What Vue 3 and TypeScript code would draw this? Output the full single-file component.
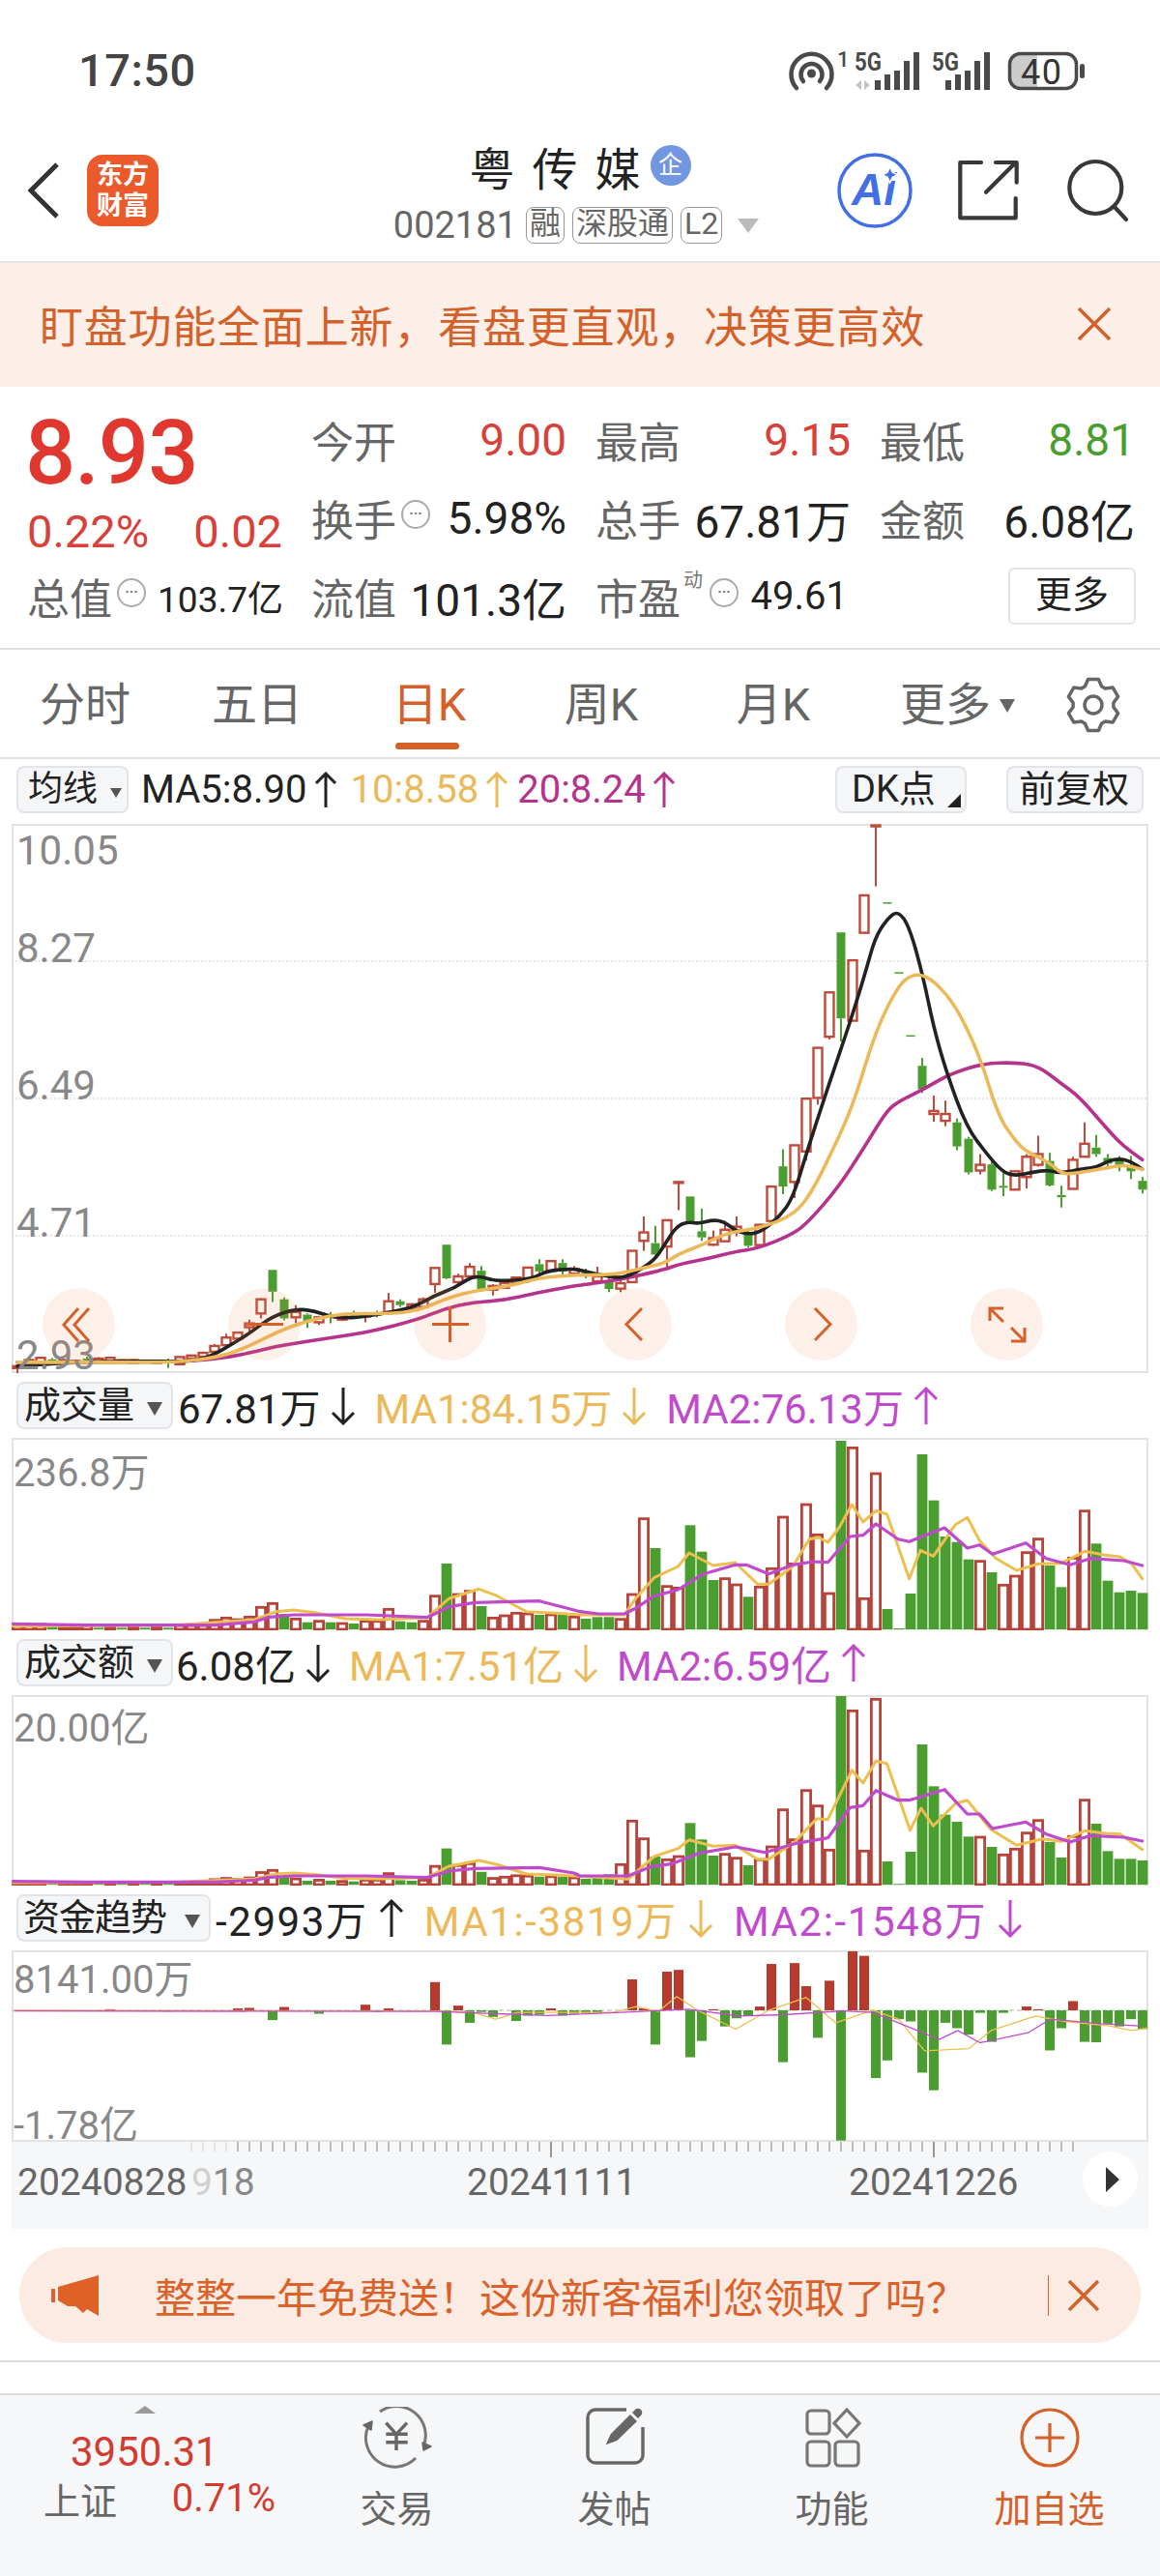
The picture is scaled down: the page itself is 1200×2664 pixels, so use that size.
<script setup lang="ts">
type Seg = { t: string; c: string; arrow?: "up" | "down" };

// candle: index, colour (1 red, 0 green), wick high, body top, body bottom, wick low (read off the 2.53x crop)
const rawCandles: number[][] = [
  [0,1,1495,1500,1505,1518],[1,1,1480,1484,1492,1496],[2,1,1475,1478,1490,1494],[3,0,1478,1482,1490,1494],[4,1,1482,1484,1490,1494],
  [5,1,1484,1486,1490,1492],[6,0,1475,1480,1484,1490],[7,1,1476,1480,1488,1492],[8,1,1476,1478,1488,1490],[9,1,1482,1484,1488,1490],
  [10,1,1482,1484,1492,1494],[11,0,1484,1485,1488,1490],[12,1,1484,1486,1492,1494],[13,0,1480,1486,1490,1505],[14,1,1475,1476,1495,1498],
  [15,1,1470,1472,1480,1482],[16,1,1462,1465,1475,1478],[17,1,1442,1447,1462,1468],[18,1,1415,1425,1445,1448],[19,1,1410,1412,1428,1432],
  [20,1,1378,1388,1398,1412],[21,1,1322,1325,1362,1375],[22,0,1248,1248,1305,1332],[23,0,1320,1325,1375,1380],[24,1,1340,1358,1372,1388],
  [25,0,1362,1365,1385,1400],[26,1,1368,1372,1385,1392],[27,0,1358,1365,1372,1388],[28,1,1362,1368,1378,1382],[29,0,1355,1362,1368,1375],
  [30,1,1358,1362,1370,1385],[31,0,1355,1360,1368,1372],[32,1,1308,1330,1358,1360],[33,0,1325,1330,1340,1345],[34,1,1335,1338,1350,1355],
  [35,1,1320,1325,1345,1350],[36,1,1243,1243,1285,1308],[37,0,1182,1182,1270,1272],[38,1,1258,1265,1280,1285],[39,1,1230,1240,1265,1272],
  [40,0,1238,1250,1300,1305],[41,1,1285,1290,1300,1315],[42,1,1278,1282,1295,1298],[43,1,1265,1268,1282,1285],[44,1,1240,1242,1270,1282],
  [45,0,1220,1233,1252,1258],[46,1,1225,1225,1250,1255],[47,0,1220,1230,1252,1265],[48,1,1238,1245,1258,1265],[49,0,1245,1255,1265,1270],
  [50,1,1240,1265,1278,1280],[51,0,1260,1278,1298,1306],[52,1,1270,1283,1297,1306],[53,1,1198,1198,1280,1282],[54,1,1108,1150,1172,1198],
  [55,0,1133,1178,1208,1215],[56,1,1118,1118,1187,1245],[57,1,1016,1018,1020,1092],[58,0,1056,1056,1125,1125],[59,0,1088,1147,1163,1172],
  [60,1,1145,1165,1182,1185],[61,1,1120,1143,1173,1175],[62,1,1108,1135,1145,1160],[63,0,1145,1152,1185,1190],[64,1,1128,1130,1183,1185],
  [65,1,1030,1030,1120,1125],[66,0,932,977,1030,1050],[67,1,922,922,1018,1060],[68,1,800,800,938,962],[69,1,667,667,798,815],
  [70,1,522,522,638,645],[71,0,365,365,590,650],[72,1,438,438,596,598],[73,1,268,268,366,366],[74,1,85,85,87,245],
  [75,0,286,286,289,289],[76,0,469,469,472,472],[77,0,634,634,637,637],[78,0,693,714,775,785],[79,1,792,832,840,860],
  [80,1,805,840,858,872],[81,0,852,862,925,935],[82,0,900,905,993,998],[83,1,945,973,988,998],[84,0,960,972,1038,1042],
  [85,0,990,1028,1033,1055],[86,1,988,990,1038,1040],[87,1,945,952,1005,1035],[88,1,897,945,973,978],[89,0,942,963,1027,1030],
  [90,0,1028,1052,1058,1085],[91,1,952,960,1036,1036],[92,1,862,918,952,952],[93,0,895,928,945,952],[94,0,945,955,970,985],
  [95,0,950,960,975,990],[96,0,950,975,990,1010],[97,0,1005,1015,1038,1048],
];
const cx = (i: number) => 18 + 12 * i;
const cy = (z: number) => 820 + z / 2.53;
const candles = rawCandles.map(([i, red, h, t, b, l]) => ({
  x: cx(i),
  red: red === 1,
  h: cy(h),
  t: cy(t),
  b: cy(b),
  l: cy(l),
}));

const colours =
  "rrrgrrrgrgrgrgrrrrrrrrrgrgrgrgrrrggrrgrrgrrrrgrgrggg" +
  "rrrgrrgggrrgrrrrrrrgrrrggggggggrgrrrrggrrggggg";

const volLeft = [1380,1378,1375,1384,1382,1382,1378,1385,1385,1385,1385,1385,1385,1385,1378,1378,1378,1362,1355,1360,1352,1322,1310,1342,1358,1368,1365,1368,1372,1372,1365,1365,1328,1365,1368,1365,1287,1186,1282,1272,1318,1355,1348,1340,1342,1345,1345,1345,1352];
const volRight = [700,695,695,702,625,390,481,600,605,410,492,580,576,595,632,602,545,385,530,346,440,622,148,170,638,250,670,730,622,190,333,445,462,516,522,556,596,568,495,453,535,602,512,366,467,582,618,613,620];
const volHeights = [
  ...volLeft.map((z) => (1390 - z) / 3),
  ...volRight.map((z) => (733 - z) / 3),
];
const amtRight = [1495,1465,1330,1385,1440,1450,1440,1336,1387,1437,1433,1445,1467,1450,1410,1295,1388,1235,1283,1420,942,988,1423,952,1455,1525,1425,1092,1222,1310,1332,1378,1380,1410,1435,1417,1367,1328,1395,1443,1378,1265,1338,1423,1447,1447,1452];
const amtHeights = volHeights.map((h, i) => (i < 51 ? h * 0.55 : (1527 - amtRight[i - 51]) / 3));

function bars(heights: number[], base: number) {
  return heights.map((h, i) => ({ x: cx(i), red: colours[i] === "r", y: base - h, h }));
}
const volBars = bars(volHeights, 1685);
const amtBars = bars(amtHeights, 1949);

// fund trend: index -> end of the bar in the crop's y, zero line at 320
const fundRaw: number[][] = [[5,322],[8,318],[13,323],[19,316],[20,315],[22,342],[23,313],[26,328],[30,308],[31,324],[32,316],[36,258],[37,396],[38,310],[39,348],[40,324],[41,335],[43,344],[44,332],[45,330],[46,316],[47,332],[48,328],[49,326],[50,325],[53,252],[54,316],[55,396],[56,235],[57,231],[58,424],[59,388],[60,318],[61,356],[62,338],[63,333],[64,312],[65,218],[66,435],[67,216],[68,267],[69,381],[70,255],[71,608],[72,190],[73,200],[74,470],[75,431],[76,340],[77,345],[78,458],[79,497],[80,348],[81,360],[82,374],[83,326],[84,390],[85,326],[87,312],[88,318],[89,409],[90,360],[91,300],[92,390],[93,391],[94,350],[95,356],[96,340],[97,362]];
const fy = (z: number) => 1930 + z / 2.136;
const fundBars = fundRaw.map(([i, z]) => ({
  x: cx(i),
  red: z < 320,
  y: Math.min(fy(z), 2080),
  h: Math.abs(fy(z) - 2080),
}));

function join(list: number[], fx: (n: number) => number, fyy: (n: number) => number) {
  const out: string[] = [];
  for (let i = 0; i < list.length; i += 2) out.push(`${fx(list[i]).toFixed(1)},${fyy(list[i + 1]).toFixed(1)}`);
  return out.join(" ");
}

// rounds the corners of a point list, the price averages are smooth curves
function smooth(points: string) {
  const p = points.split(" ").map((s) => s.split(",").map(Number));
  let d = `M${p[0][0]} ${p[0][1]}`;
  for (let i = 1; i < p.length - 1; i++) {
    const mx = ((p[i][0] + p[i + 1][0]) / 2).toFixed(1);
    const my = ((p[i][1] + p[i + 1][1]) / 2).toFixed(1);
    d += `Q${p[i][0]} ${p[i][1]} ${mx} ${my}`;
  }
  const last = p[p.length - 1];
  return d + `L${last[0]} ${last[1]}`;
}

const lx3 = (z: number) => z / 2.613;
const rx3 = (z: number) => 600 + z / 2.613;
const main = (l: number[], r: number[]) => smooth(join(l, lx3, cy) + " " + join(r, rx3, cy));

const ma5 = main(
  [47,1500,200,1490,300,1487,450,1487,500,1488,560,1480,640,1435,680,1410,735,1370,800,1350,850,1355,890,1370,950,1375,1050,1360,1120,1345,1175,1315,1230,1295,1270,1268,1300,1265,1330,1275,1380,1277,1440,1270,1480,1250,1540,1245],
  [0,1248,50,1260,105,1270,140,1260,200,1225,230,1180,260,1135,290,1122,320,1127,360,1117,390,1122,420,1145,455,1155,490,1148,540,1108,575,1060,610,950,670,770,730,600,770,475,797,380,830,330,860,308,890,350,925,470,955,610,990,730,1045,875,1100,945,1140,990,1175,1003,1235,990,1270,988,1300,995,1360,983,1395,980,1430,962,1460,957,1490,965,1520,985],
);
const ma10 = main(
  [47,1490,300,1490,480,1490,600,1475,680,1445,750,1410,820,1385,890,1368,950,1362,1050,1363,1130,1355,1200,1325,1270,1305,1380,1290,1460,1268,1550,1262],
  [0,1262,100,1260,160,1245,230,1230,265,1207,330,1183,400,1150,490,1138,580,1103,630,1040,700,900,740,810,800,620,860,505,895,477,925,476,960,495,1015,555,1080,685,1130,845,1180,915,1210,940,1270,968,1300,995,1330,997,1430,980,1470,973,1520,985],
);
const ma20 = main(
  [47,1490,450,1490,600,1480,700,1460,760,1445,900,1425,1000,1410,1130,1378,1200,1350,1280,1332,1360,1328,1450,1308,1550,1290],
  [0,1288,100,1275,230,1247,270,1232,350,1218,420,1200,480,1192,575,1155,620,1120,700,1030,770,925,830,830,865,805,930,775,1000,735,1090,708,1180,705,1240,715,1300,760,1350,795,1430,885,1470,925,1520,960],
);

const lx4 = (z: number) => z / 2.24;
const ly4 = (z: number) => 1220 + z / 3;
const ry5 = (z: number) => 1440 + z / 3;
const volOrangeLeft = [30,1385,400,1382,590,1365,640,1340,680,1335,730,1343,800,1362,880,1365,990,1358,1040,1300,1110,1270,1150,1290,1220,1340,1290,1345];
const volPurpleLeft = [30,1378,200,1382,500,1382,590,1372,620,1358,680,1350,850,1350,990,1358,1040,1325,1100,1312,1250,1307,1330,1335];
const volOrange = join(volOrangeLeft, lx4, ly4) + " " + join([0,690,120,690,150,640,200,575,265,540,295,498,360,537,420,528,480,595,510,595,575,540,620,455,645,450,670,465,700,420,735,348,765,402,800,367,830,378,890,578,920,490,955,508,1015,410,1047,388,1080,460,1125,515,1180,552,1240,532,1300,530,1365,493,1420,505,1460,510,1490,530,1520,578], rx3, ry5);
const volPurple = join(volPurpleLeft, lx4, ly4) + " " + join([0,680,50,687,120,687,150,670,200,632,265,612,330,565,420,535,450,535,510,563,575,535,630,525,670,527,730,447,765,443,800,408,860,455,890,463,985,420,1047,483,1080,473,1115,502,1205,467,1260,515,1325,535,1380,515,1470,522,1520,537], rx3, ry5);
const amtLeft = (z: number) => 1949 - (1685 - ly4(z)) * 0.6;
const amtOrange = join(volOrangeLeft, lx4, amtLeft) + " " + join([130,1510,200,1440,265,1415,295,1388,360,1408,420,1405,480,1448,510,1448,580,1395,640,1322,670,1325,735,1172,765,1212,800,1143,830,1152,892,1358,922,1290,955,1345,1015,1275,1047,1265,1110,1355,1180,1405,1250,1385,1300,1393,1365,1360,1420,1368,1460,1370,1520,1418], rx3, ry5);
const amtPurple = join(volPurpleLeft, lx4, amtLeft) + " " + join([0,1500,130,1500,190,1472,250,1462,320,1430,420,1410,500,1427,580,1400,670,1382,730,1288,765,1282,800,1235,860,1265,890,1265,985,1232,1047,1308,1080,1308,1115,1353,1205,1333,1260,1370,1325,1395,1380,1375,1470,1380,1520,1392], rx3, ry5);

const lx6 = (z: number) => z / 1.307;
const fundOrange = join([20,320,580,322,640,325,670,340,700,325,830,325,860,312,890,323,915,290,945,322,995,362,1040,320,1090,292,1130,348,1180,320,1215,340,1250,410,1310,405,1340,365,1400,333,1440,345,1500,355,1530,365,1550,360], lx6, fy);
const fundPurple = join([20,322,590,323,740,332,840,325,930,318,1000,333,1060,330,1140,322,1180,325,1270,385,1295,365,1325,392,1390,370,1420,340,1490,350,1540,355], lx6, fy);

const ticks = Array.from({ length: 77 }, (_, k) => ({ x: cx(k + 15), long: k + 15 === 46 || k + 15 === 79, faint: k < 4 }));

const priceLabels = [
  { t: "10.05", top: 3 },
  { t: "8.27", top: 104 },
  { t: "6.49", top: 246 },
  { t: "4.71", top: 388 },
  { t: "2.93", top: 525 },
];
const navButtons = ["first", "minus", "plus", "prev", "next", "expand"];

const maLegend: Seg[] = [
  { t: "MA5:8.90", c: "k", arrow: "up" },
  { t: "10:8.58", c: "o", arrow: "up" },
  { t: "20:8.24", c: "m", arrow: "up" },
];
const volLegend: Seg[] = [
  { t: "67.81万", c: "k", arrow: "down" },
  { t: "MA1:84.15万", c: "o", arrow: "down" },
  { t: "MA2:76.13万", c: "p", arrow: "up" },
];
const amtLegend: Seg[] = [
  { t: "6.08亿", c: "k", arrow: "down" },
  { t: "MA1:7.51亿", c: "o", arrow: "down" },
  { t: "MA2:6.59亿", c: "p", arrow: "up" },
];
const fundLegend: Seg[] = [
  { t: "-2993万", c: "k", arrow: "up" },
  { t: "MA1:-3819万", c: "o", arrow: "down" },
  { t: "MA2:-1548万", c: "p", arrow: "down" },
];

const tabs = ["分时", "五日", "日K", "周K", "月K", "更多"];

// six rounded teeth round a ring
const gearPath = (() => {
  const c = 30;
  const pts: string[] = [];
  for (let k = 0; k < 6; k++) {
    const a = (k * Math.PI) / 3 - Math.PI / 2;
    for (const [r, d] of [[21, -0.42], [27, -0.2], [27, 0.2], [21, 0.42]]) {
      pts.push(`${(c + r * Math.cos(a + d)).toFixed(1)},${(c + r * Math.sin(a + d)).toFixed(1)}`);
    }
  }
  return "M" + pts.join("L") + "Z";
})();
</script>

<template>
  <div class="page">
    <div class="status">
      <span class="time">17:50</span>
      <svg class="sys" width="310" height="60" viewBox="815 45 310 60">
        <g fill="none" stroke="#4a4a4a" stroke-width="4.5" stroke-linecap="round">
          <path d="M824 91a21 21 0 1 1 31 0" />
          <path d="M831 84a11 11 0 1 1 17 0" />
        </g>
        <circle cx="839.5" cy="76" r="4.5" fill="#4a4a4a" />
        <text x="866" y="69" class="sm">1</text>
        <text x="884" y="73" class="sg" textLength="28" lengthAdjust="spacingAndGlyphs">5G</text>
        <path d="M891 83v10l-6-5zM894 83v10l6-5z" fill="#c4c4c4" />
        <path d="M905 83h6v10h-6zM915 77h6v16h-6zM925 73h6v20h-6zM935 63h6v30h-6zM945 54h6v39h-6z" fill="#4a4a4a" />
        <text x="964" y="73" class="sg" textLength="28" lengthAdjust="spacingAndGlyphs">5G</text>
        <path d="M978 83h6v10h-6zM988 77h6v16h-6zM998 73h6v20h-6zM1008 63h6v30h-6zM1018 54h6v39h-6z" fill="#4a4a4a" />
        <path d="M1046 66a9 9 0 0 1 9-9h18v33h-18a9 9 0 0 1-9-9z" fill="#ccc" />
        <rect x="1044.5" y="55.5" width="69" height="36" rx="11" fill="none" stroke="#4a4a4a" stroke-width="3.5" />
        <text x="1056" y="87" class="bt">40</text>
        <rect x="1117" y="66" width="5" height="15" rx="2.5" fill="#4a4a4a" />
      </svg>
    </div>

    <div class="head">
      <svg class="back" width="34" height="60" viewBox="0 0 34 60">
        <path d="M31 3 4 30l27 27" fill="none" stroke="#333" stroke-width="5" />
      </svg>
      <div class="logo">东方<br />财富</div>
      <div class="title">
        <div class="name">
          <span>粤传媒</span>
          <i class="corp">企</i>
        </div>
        <div class="code">
          <span class="num">002181</span>
          <span class="tag">融</span>
          <span class="tag">深股通</span>
          <span class="tag">L2</span>
          <i class="drop"></i>
        </div>
      </div>
      <svg class="ai" width="78" height="78" viewBox="0 0 78 78">
        <circle cx="39" cy="39" r="37" fill="none" stroke="#4270e4" stroke-width="3.5" />
        <text x="15" y="54" class="ai-t">Ai</text>
        <path d="M54.7 14.5l2.6 5.6 5.6 2.6-5.6 2.6-2.6 5.6-2.6-5.6-5.6-2.6 5.6-2.6z" fill="#4270e4" stroke="#fff" stroke-width="1.5" />
      </svg>
      <svg class="share" width="64" height="64" viewBox="0 0 64 64">
        <g fill="none" stroke="#383838" stroke-width="4.2" stroke-linecap="round" stroke-linejoin="round">
          <path d="M25 3H3.300v57.300h57.400V40" />
          <path d="M30 33.700 60 3.700M40 3h21.700v20.700" />
        </g>
      </svg>
      <svg class="search" width="68" height="66" viewBox="0 0 68 66">
        <g fill="none" stroke="#383838" stroke-width="4.2" stroke-linecap="round">
          <circle cx="30.300" cy="30" r="27" />
          <path d="M50 50l12 13" />
        </g>
      </svg>
    </div>

    <div class="notice">
      <span>盯盘功能全面上新，看盘更直观，决策更高效</span>
      <svg width="36" height="34" viewBox="0 0 36 34">
        <path d="M2 1l32 32M34 1 2 33" stroke="#d4602a" stroke-width="3.5" />
      </svg>
    </div>

    <div class="quote">
      <div class="last">8.93</div>
      <div class="cell"><span class="lb">今开</span><b class="up">9.00</b></div>
      <div class="cell"><span class="lb">最高</span><b class="up">9.15</b></div>
      <div class="cell"><span class="lb">最低</span><b class="dn">8.81</b></div>

      <div class="cell change"><b class="up">0.22%</b><b class="up">0.02</b></div>
      <div class="cell"><span class="lb">换手<i class="info">···</i></span><b>5.98%</b></div>
      <div class="cell"><span class="lb">总手</span><b>67.81万</b></div>
      <div class="cell"><span class="lb">金额</span><b>6.08亿</b></div>

      <div class="cell"><span class="lb">总值<i class="info">···</i></span><b class="small">103.7亿</b></div>
      <div class="cell"><span class="lb">流值</span><b>101.3亿</b></div>
      <div class="cell pe">
        <span class="lb">市盈<sup>动</sup><i class="info">···</i></span><b class="small2">49.61</b>
      </div>
      <div class="cell end"><span class="more">更多</span></div>
    </div>

    <div class="tabs">
      <div class="tab-grid">
        <div v-for="t in tabs" :key="t" class="tab" :class="{ on: t === '日K' }">
          {{ t }}<i v-if="t === '更多'" class="tab-drop"></i>
        </div>
      </div>
      <svg class="gear" width="60" height="60" viewBox="0 0 60 60">
        <path :d="gearPath" fill="none" stroke="#666" stroke-width="3.5" stroke-linejoin="round" />
        <circle cx="30" cy="30" r="9" fill="none" stroke="#666" stroke-width="3.5" />
      </svg>
    </div>

    <div class="legend main-legend">
      <div class="pick w116">均线<i class="caret small-caret"></i></div>
      <template v-for="s in maLegend" :key="s.t">
        <span :class="s.c">{{ s.t }}</span>
        <svg class="arrow" :class="s.c" width="24" height="38" viewBox="0 0 24 38">
          <path d="M12 37V2M2 12 12 2l10 10" fill="none" stroke="currentColor" stroke-width="3" />
        </svg>
      </template>
      <div class="fill"></div>
      <div class="pick w136">DK点<i class="corner"></i></div>
      <div class="pick w142">前复权</div>
    </div>

    <div class="chart c1">
      <svg width="1176" height="568" viewBox="12 852 1176 568">
        <path d="M12 994h1176M12 1136h1176M12 1278h1176" stroke="#d8d8d8" stroke-width="1.5" stroke-dasharray="1.5 2.5" />
        <g v-for="(k, i) in candles" :key="i">
          <path :d="`M${k.x} ${k.h}V${k.t}M${k.x} ${k.b}V${k.l}`" :stroke="k.red ? '#bf4a3a' : '#4a9e2f'" stroke-width="2" />
          <rect v-if="k.red" :x="k.x - 4.5" :y="k.t" width="9" :height="Math.max(k.b - k.t, 1)" fill="#fff" stroke="#bf4a3a" stroke-width="2.4" />
          <rect v-else :x="k.x - 4.5" :y="k.t" width="9" :height="Math.max(k.b - k.t, 1.5)" fill="#4a9e2f" />
        </g>
        <path :d="ma20" class="line" stroke="#b5338a" stroke-width="3.6" />
        <path :d="ma5" class="line" stroke="#222" stroke-width="3.6" />
        <path :d="ma10" class="line" stroke="#ecb95a" stroke-width="3.6" />
      </svg>
      <span v-for="p in priceLabels" :key="p.t" class="axis-t" :style="{ top: p.top + 'px' }">{{ p.t }}</span>
      <div class="nav">
        <div v-for="n in navButtons" :key="n" class="round">
          <svg width="75" height="75" viewBox="0 0 75 75" fill="none" stroke="#d4602a" stroke-width="3">
            <path v-if="n === 'first'" d="M37 21 22 38l15 17M48 21 33 38l15 17" />
            <path v-if="n === 'minus'" d="M19 37.5h38" />
            <path v-if="n === 'plus'" d="M19 37.5h38M37.5 19v37" />
            <path v-if="n === 'prev'" d="M44 21 28 37.5 44 54" />
            <path v-if="n === 'next'" d="M31 21l16 16.5L31 54" />
            <path v-if="n === 'expand'" d="M20 34V21h14M20 21l14 14M56 41v14H42M56 55 42 41" />
          </svg>
        </div>
      </div>
    </div>

    <div class="legend vol">
      <div class="pick w162">成交量<i class="caret"></i></div>
      <template v-for="s in volLegend" :key="s.t">
        <span :class="s.c">{{ s.t }}</span>
        <svg class="arrow" :class="s.c" width="26" height="40" viewBox="0 0 26 40">
          <path v-if="s.arrow === 'up'" d="M13 39V2M2 13 13 2l11 11" fill="none" stroke="currentColor" stroke-width="3" />
          <path v-else d="M13 1v37M2 27l11 11 11-11" fill="none" stroke="currentColor" stroke-width="3" />
        </svg>
      </template>
    </div>

    <div class="chart c2">
      <svg width="1176" height="199" viewBox="12 1487 1176 199">
        <g v-for="(b, i) in volBars" :key="i">
          <rect v-if="b.red" :x="b.x - 4.6" :y="b.y" width="9.2" :height="b.h" fill="#fff" stroke="#b8433a" stroke-width="2.8" />
          <rect v-else :x="b.x - 5.4" :y="b.y" width="10.8" :height="b.h" fill="#4a9e2f" />
        </g>
        <polyline :points="volOrange" class="line" stroke="#ecbf4e" stroke-width="3" />
        <polyline :points="volPurple" class="line" stroke="#bf4bcc" stroke-width="3.2" />
      </svg>
      <span class="axis-t side" style="top: 12px">236.8万</span>
    </div>

    <div class="legend amt">
      <div class="pick w162">成交额<i class="caret"></i></div>
      <template v-for="s in amtLegend" :key="s.t">
        <span :class="s.c">{{ s.t }}</span>
        <svg class="arrow" :class="s.c" width="26" height="40" viewBox="0 0 26 40">
          <path v-if="s.arrow === 'up'" d="M13 39V2M2 13 13 2l11 11" fill="none" stroke="currentColor" stroke-width="3" />
          <path v-else d="M13 1v37M2 27l11 11 11-11" fill="none" stroke="currentColor" stroke-width="3" />
        </svg>
      </template>
    </div>

    <div class="chart c3">
      <svg width="1176" height="197" viewBox="12 1753 1176 197">
        <g v-for="(b, i) in amtBars" :key="i">
          <rect v-if="b.red" :x="b.x - 4.6" :y="b.y" width="9.2" :height="b.h" fill="#fff" stroke="#b8433a" stroke-width="2.8" />
          <rect v-else :x="b.x - 5.4" :y="b.y" width="10.8" :height="b.h" fill="#4a9e2f" />
        </g>
        <polyline :points="amtOrange" class="line" stroke="#ecbf4e" stroke-width="3" />
        <polyline :points="amtPurple" class="line" stroke="#bf4bcc" stroke-width="3.2" />
      </svg>
      <span class="axis-t side" style="top: 10px">20.00亿</span>
    </div>

    <div class="legend fund">
      <div class="pick w201">资金趋势<i class="caret"></i></div>
      <template v-for="s in fundLegend" :key="s.t">
        <span :class="s.c">{{ s.t }}</span>
        <svg class="arrow" :class="s.c" width="26" height="40" viewBox="0 0 26 40">
          <path v-if="s.arrow === 'up'" d="M13 39V2M2 13 13 2l11 11" fill="none" stroke="currentColor" stroke-width="3" />
          <path v-else d="M13 1v37M2 27l11 11 11-11" fill="none" stroke="currentColor" stroke-width="3" />
        </svg>
      </template>
    </div>

    <div class="chart c4">
      <svg width="1176" height="198" viewBox="12 2018 1176 198">
        <path d="M12 2080h1176" stroke="#ccc" stroke-width="1.5" stroke-dasharray="5 3" />
        <rect v-for="(b, i) in fundBars" :key="i" :x="b.x - 5" :y="b.y" width="10" :height="b.h" :fill="b.red ? '#b8392e' : '#4a9e2f'" />
        <polyline :points="fundOrange" class="line" stroke="#ecbf4e" stroke-width="1.3" />
        <polyline :points="fundPurple" class="line" stroke="#bf4bcc" stroke-width="1.3" />
      </svg>
      <span class="axis-t side" style="top: 6px">8141.00万</span>
      <span class="axis-t side" style="top: 157px">-1.78亿</span>
    </div>

    <div class="axis">
      <svg width="1176" height="20" viewBox="12 2216 1176 20">
        <path
          v-for="t in ticks"
          :key="t.x"
          :d="`M${t.x} 2216V${t.long ? 2232 : 2226}`"
          :stroke="t.long ? '#777' : t.faint ? '#ddd' : '#aaa'"
          stroke-width="1.5"
        />
      </svg>
      <span class="date" style="left: 6px">20240828</span>
      <span class="date fade" style="left: 186px"><em>9</em>18</span>
      <span class="date" style="left: 471px">20241111</span>
      <span class="date" style="left: 866px">20241226</span>
      <div class="play"><i></i></div>
    </div>

    <div class="ad">
      <svg width="52" height="44" viewBox="0 0 52 44">
        <path d="M1 15h4v14H1zM8 13 50 1v42L38 36l-4 4-8-7-8 0L8 27z" fill="#de6228" />
      </svg>
      <span class="ad-t">整整一年免费送！这份新客福利您领取了吗？</span>
      <i class="ad-sep"></i>
      <svg width="34" height="34" viewBox="0 0 34 34">
        <path d="M2 2l30 30M32 2 2 32" stroke="#d4602a" stroke-width="3.5" />
      </svg>
    </div>

    <div class="spacer"></div>

    <div class="bottom">
      <div class="index">
        <i class="idx-up"></i>
        <div class="idx-v">3950.31</div>
        <div class="idx-row"><span>上证</span><b>0.71%</b></div>
      </div>
      <div class="item">
        <svg width="76" height="64" viewBox="0 0 76 64" fill="none" stroke="#777" stroke-width="3">
          <path d="M20 5A30 30 0 0 1 65 41" />
          <path d="M57 53A30 30 0 0 1 8 20" />
          <path d="M64 37l1 8 8-4zM3 19l9-4-1 9z" fill="#666" stroke="#666" stroke-width="1.5" stroke-linejoin="round" />
          <path d="M26.300 16.700 37 28.300 48 16.700M37 28.300V45M26.300 28.300h22.400M26.300 36.700h22.400" stroke="#666" stroke-width="3.4" />
        </svg>
        <span>交易</span>
      </div>
      <div class="item">
        <svg width="64" height="64" viewBox="0 0 64 64" fill="none" stroke="#666" stroke-width="3.4">
          <path d="M44 3H12a8 8 0 0 0-8 8v39a8 8 0 0 0 8 8h41a8 8 0 0 0 8-8V21" />
          <path d="M22.700 39.300 27.700 28.300 48 8l7 7-20.700 20zM50 6l3-3a3 3 0 0 1 6 6l-3 3z" fill="#666" stroke="none" />
        </svg>
        <span>发帖</span>
      </div>
      <div class="item">
        <svg width="64" height="64" viewBox="0 0 64 64" fill="none" stroke="#777" stroke-width="3.2">
          <rect x="6" y="4" width="23" height="24" rx="4" />
          <path d="M47 3l13 14-13 14-13-14z" />
          <rect x="6" y="36" width="23" height="25" rx="4" />
          <rect x="35" y="36" width="24" height="25" rx="4" />
        </svg>
        <span>功能</span>
      </div>
      <div class="item add">
        <svg width="64" height="64" viewBox="0 0 64 64" fill="none" stroke="#d4602a" stroke-width="3.2">
          <circle cx="32" cy="32" r="29" />
          <path d="M17 32h30M32 17v30" />
        </svg>
        <span>加自选</span>
      </div>
    </div>
  </div>
</template>

<style>
html,
body {
  margin: 0;
  background: #fff;
}
</style>

<style scoped>
.page {
  width: 1200px;
  height: 2664px;
  overflow: hidden;
  background: #fff;
  color: #222;
  font-family: Roboto, "Noto Sans CJK SC", sans-serif;
}
.status {
  height: 130px;
  display: flex;
  align-items: flex-start;
  justify-content: space-between;
  padding: 0 75px 0 81px;
  box-sizing: border-box;
}
.time {
  margin-top: 46px;
  font-size: 47px;
  line-height: 54px;
  color: #444;
  letter-spacing: 0.5px;
  font-weight: 500;
}
.sys {
  margin-top: 45px;
}
.sm {
  font-size: 22px;
  fill: #4a4a4a;
  font-weight: 500;
}
.sg {
  font-size: 25px;
  fill: #4a4a4a;
  font-weight: 700;
}
.bt {
  font-size: 36px;
  fill: #333;
  letter-spacing: 1.5px;
}
.head {
  height: 142px;
  box-sizing: border-box;
  border-bottom: 2px solid #e3e3e3;
  display: flex;
  align-items: center;
  padding: 0 0 7px 28px;
}
.back {
  flex: none;
}
.logo {
  width: 74px;
  height: 74px;
  margin-left: 28px;
  flex: none;
  box-sizing: border-box;
  padding-top: 5px;
  border-radius: 16px;
  background: #ea5a2b;
  color: #fff;
  font-size: 27px;
  line-height: 32px;
  text-align: center;
  font-weight: 700;
}
.title {
  width: 400px;
  margin-left: 232px;
  flex: none;
  display: flex;
  flex-direction: column;
  align-items: center;
}
.name {
  display: flex;
  align-items: center;
  height: 66px;
  font-size: 47px;
  letter-spacing: 18px;
  color: #222;
  padding-left: 8px;
}
.corp {
  width: 42px;
  height: 42px;
  margin-left: -8px;
  border-radius: 50%;
  background: #7296e0;
  color: #fff;
  font-size: 25px;
  font-style: normal;
  line-height: 42px;
  letter-spacing: 0;
  text-align: center;
}
.code {
  margin-top: 7px;
  display: flex;
  align-items: center;
  gap: 8px;
  color: #666;
}
.num {
  font-size: 38px;
  margin-right: 1px;
}
.tag {
  height: 38px;
  box-sizing: border-box;
  padding: 0 3px;
  border: 1.5px solid #999;
  border-radius: 8px;
  font-size: 32px;
  line-height: 33px;
}
.drop {
  margin-left: 8px;
  border-left: 11px solid transparent;
  border-right: 11px solid transparent;
  border-top: 15px solid #bbb;
}
.ai {
  margin-left: 70px;
  flex: none;
}
.ai-t {
  font-size: 46px;
  font-weight: 700;
  font-style: italic;
  fill: #4270e4;
  font-family: "Liberation Sans", sans-serif;
}
.share {
  margin-left: 46px;
  flex: none;
}
.search {
  margin-left: 49px;
  flex: none;
}
.notice {
  height: 128px;
  background: #fcefe8;
  color: #d4602a;
  font-size: 45px;
  display: flex;
  align-items: center;
  justify-content: space-between;
  padding: 0 50px 2px 41px;
  box-sizing: border-box;
  letter-spacing: 0.8px;
}
.quote {
  height: 272px;
  box-sizing: border-box;
  border-bottom: 2px solid #e0e0e0;
  padding: 14px 28px 0;
  display: grid;
  grid-template-columns: repeat(4, 264px);
  grid-template-rows: repeat(3, 81px);
  column-gap: 30px;
  align-items: center;
}
.last {
  font-size: 92px;
  line-height: 90px;
  font-weight: 500;
  color: #e0382e;
  letter-spacing: -1px;
  margin-top: 28px;
  margin-left: -2px;
}
.cell {
  display: flex;
  justify-content: space-between;
  align-items: center;
  height: 60px;
}
.cell b {
  font-weight: 400;
  font-size: 46px;
  color: #222;
}
.cell b.small {
  font-size: 37px;
  margin-right: -1px;
}
.cell b.small2 {
  font-size: 40px;
  margin-left: auto;
  margin-right: 3px;
}
.cell b.up {
  color: #d8403a;
}
.cell b.dn {
  color: #4a9e2f;
}
.change {
  margin-top: 28px;
}
.change b {
  font-size: 47px;
}
.lb {
  font-size: 44px;
  color: #666;
  display: inline-flex;
  align-items: center;
  white-space: nowrap;
}
.lb sup {
  font-size: 20px;
  line-height: 1;
  margin: -34px 2px 0 3px;
  color: #777;
}
.info {
  width: 30px;
  height: 30px;
  margin-left: 5px;
  box-sizing: border-box;
  border: 2px solid #aaa;
  border-radius: 50%;
  font-size: 15px;
  font-weight: 700;
  font-style: normal;
  line-height: 24px;
  text-align: center;
  color: #777;
  margin-top: -8px;
}
.end {
  justify-content: flex-end;
}
.more {
  width: 132px;
  height: 59px;
  box-sizing: border-box;
  border: 2px solid #e4e4e4;
  border-radius: 6px;
  font-size: 38px;
  line-height: 52px;
  text-align: center;
  margin-right: -1px;
}
.tabs {
  height: 113px;
  box-sizing: border-box;
  border-bottom: 2px solid #e0e0e0;
  display: flex;
  align-items: flex-start;
  padding-top: 27px;
}
.tab-grid {
  width: 1068px;
  margin-left: -1px;
  display: grid;
  grid-template-columns: repeat(6, 178px);
}
.tab {
  position: relative;
  text-align: center;
  font-size: 47px;
  line-height: 60px;
  color: #666;
}
.tab.on {
  color: #d4602a;
}
.tab.on::after {
  content: "";
  position: absolute;
  left: 54px;
  top: 69px;
  width: 66px;
  height: 7px;
  border-radius: 4px;
  background: #d4602a;
}
.tab-drop {
  position: absolute;
  left: 145px;
  top: 24px;
  border-left: 8px solid transparent;
  border-right: 8px solid transparent;
  border-top: 14px solid #666;
}
.gear {
  margin-left: 34px;
  flex: none;
}
.legend {
  height: 67px;
  display: flex;
  align-items: center;
  padding-left: 17px;
  font-size: 42px;
  white-space: nowrap;
  box-sizing: border-box;
}
.legend .arrow {
  margin: 0 21px 0 11px;
  flex: none;
}
.main-legend {
  font-size: 40px;
  padding-bottom: 4px;
}
.main-legend .arrow {
  margin: 0 14px 0 7px;
}
.main-legend span.m {
  margin-left: -5px;
}
.vol .arrow {
  margin: 0 20px 0 10px;
}
.amt .pick {
  margin-right: 3px;
}
.amt .arrow {
  margin: 0 19px 0 10px;
}
.fund span {
  letter-spacing: 1.6px;
}
.pick {
  height: 49px;
  box-sizing: border-box;
  border: 2px solid #e2e4e8;
  border-radius: 8px;
  background: #f5f6f8;
  font-size: 38px;
  line-height: 44px;
  padding-left: 5px;
  margin-right: 5px;
  position: relative;
  flex: none;
  color: #222;
}
.w116 {
  width: 116px;
  margin-right: 13px;
  font-size: 36px;
  padding-left: 10px;
}
.w136 {
  width: 136px;
  margin-right: 41px;
  padding-left: 15px;
}
.w142 {
  width: 142px;
  margin-right: 17px;
  padding-left: 11px;
  font-size: 38px;
}
.w162 {
  width: 162px;
  padding-left: 6px;
}
.w201 {
  width: 201px;
  padding-left: 5px;
  letter-spacing: -1px;
}
.caret {
  position: absolute;
  right: 9px;
  top: 19px;
  border-left: 8px solid transparent;
  border-right: 8px solid transparent;
  border-top: 14px solid #555;
}
.small-caret {
  right: 5px;
  top: 21px;
  border-left-width: 6px;
  border-right-width: 6px;
  border-top-width: 10px;
}
.corner {
  position: absolute;
  right: 4px;
  bottom: 4px;
  border-left: 14px solid transparent;
  border-bottom: 14px solid #222;
}
.fill {
  flex: 1;
}
.k {
  color: #222;
}
.o {
  color: #ecb95a;
}
.m {
  color: #b5338a;
}
.p {
  color: #bf4bcc;
}
.chart {
  margin: 0 12px;
  position: relative;
  box-shadow: inset 0 0 0 2px #e2e2e2;
}
.chart svg {
  display: block;
}
.c1 {
  height: 568px;
}
.c2 {
  height: 199px;
}
.c3 {
  height: 197px;
}
.c4 {
  height: 198px;
}
.line {
  fill: none;
  stroke-linejoin: round;
  stroke-linecap: round;
}
.axis-t {
  position: absolute;
  left: 5px;
  font-size: 42px;
  line-height: 50px;
  color: #888;
}
.side {
  left: 2px;
  font-size: 40px;
}
.nav {
  position: absolute;
  left: 32px;
  top: 480px;
  display: flex;
  gap: 117px;
}
.round {
  width: 75px;
  height: 75px;
  border-radius: 50%;
  background: rgba(236, 130, 70, 0.12);
}
.axis {
  height: 90px;
  margin: 0 12px;
  position: relative;
  background: #f6f7f9;
}
.axis svg {
  display: block;
}
.date {
  position: absolute;
  top: 17px;
  font-size: 39px;
  line-height: 50px;
  color: #666;
}
.fade {
  color: #888;
}
.fade em {
  font-style: normal;
  color: #d0d0d0;
}
.play {
  position: absolute;
  left: 1108px;
  top: 10px;
  width: 57px;
  height: 57px;
  border-radius: 50%;
  background: #fff;
  display: flex;
  align-items: center;
  justify-content: center;
}
.play i {
  margin-left: 4px;
  border-top: 13px solid transparent;
  border-bottom: 13px solid transparent;
  border-left: 14px solid #333;
}
.ad {
  height: 99px;
  margin: 19px 20px 0;
  padding: 0 42px 0 32px;
  box-sizing: border-box;
  border-radius: 50px;
  background: #fcebe2;
  color: #d9622b;
  display: flex;
  align-items: center;
}
.ad-t {
  margin-left: 56px;
  font-size: 42px;
  flex: 1;
  white-space: nowrap;
}
.ad-sep {
  width: 1px;
  height: 42px;
  background: #d4602a;
  margin-right: 19px;
}
.spacer {
  height: 32px;
  margin-top: 18px;
  border-top: 2px solid #ddd;
  border-bottom: 2px solid #ddd;
}
.bottom {
  height: 190px;
  background: #f6f7f9;
  display: flex;
  align-items: flex-start;
}
.index {
  width: 298px;
  flex: none;
  position: relative;
  padding: 35px 0 0 45px;
  box-sizing: border-box;
}
.idx-up {
  position: absolute;
  left: 139px;
  top: 11px;
  border-left: 11px solid transparent;
  border-right: 11px solid transparent;
  border-bottom: 8px solid #999;
}
.idx-v {
  margin-left: 28px;
  font-size: 42px;
  line-height: 48px;
  color: #d23c30;
}
.idx-row {
  margin-top: -4px;
  display: flex;
  justify-content: space-between;
  align-items: center;
  width: 240px;
  font-size: 38px;
  color: #666;
}
.idx-row b {
  font-weight: 400;
  color: #d23c30;
  font-size: 40px;
}
.item {
  width: 225px;
  flex: none;
  display: flex;
  flex-direction: column;
  align-items: center;
  padding-top: 12px;
  font-size: 38px;
  color: #666;
}
.item span {
  margin-top: 18px;
  line-height: 48px;
}
.add {
  color: #d4602a;
}
</style>
